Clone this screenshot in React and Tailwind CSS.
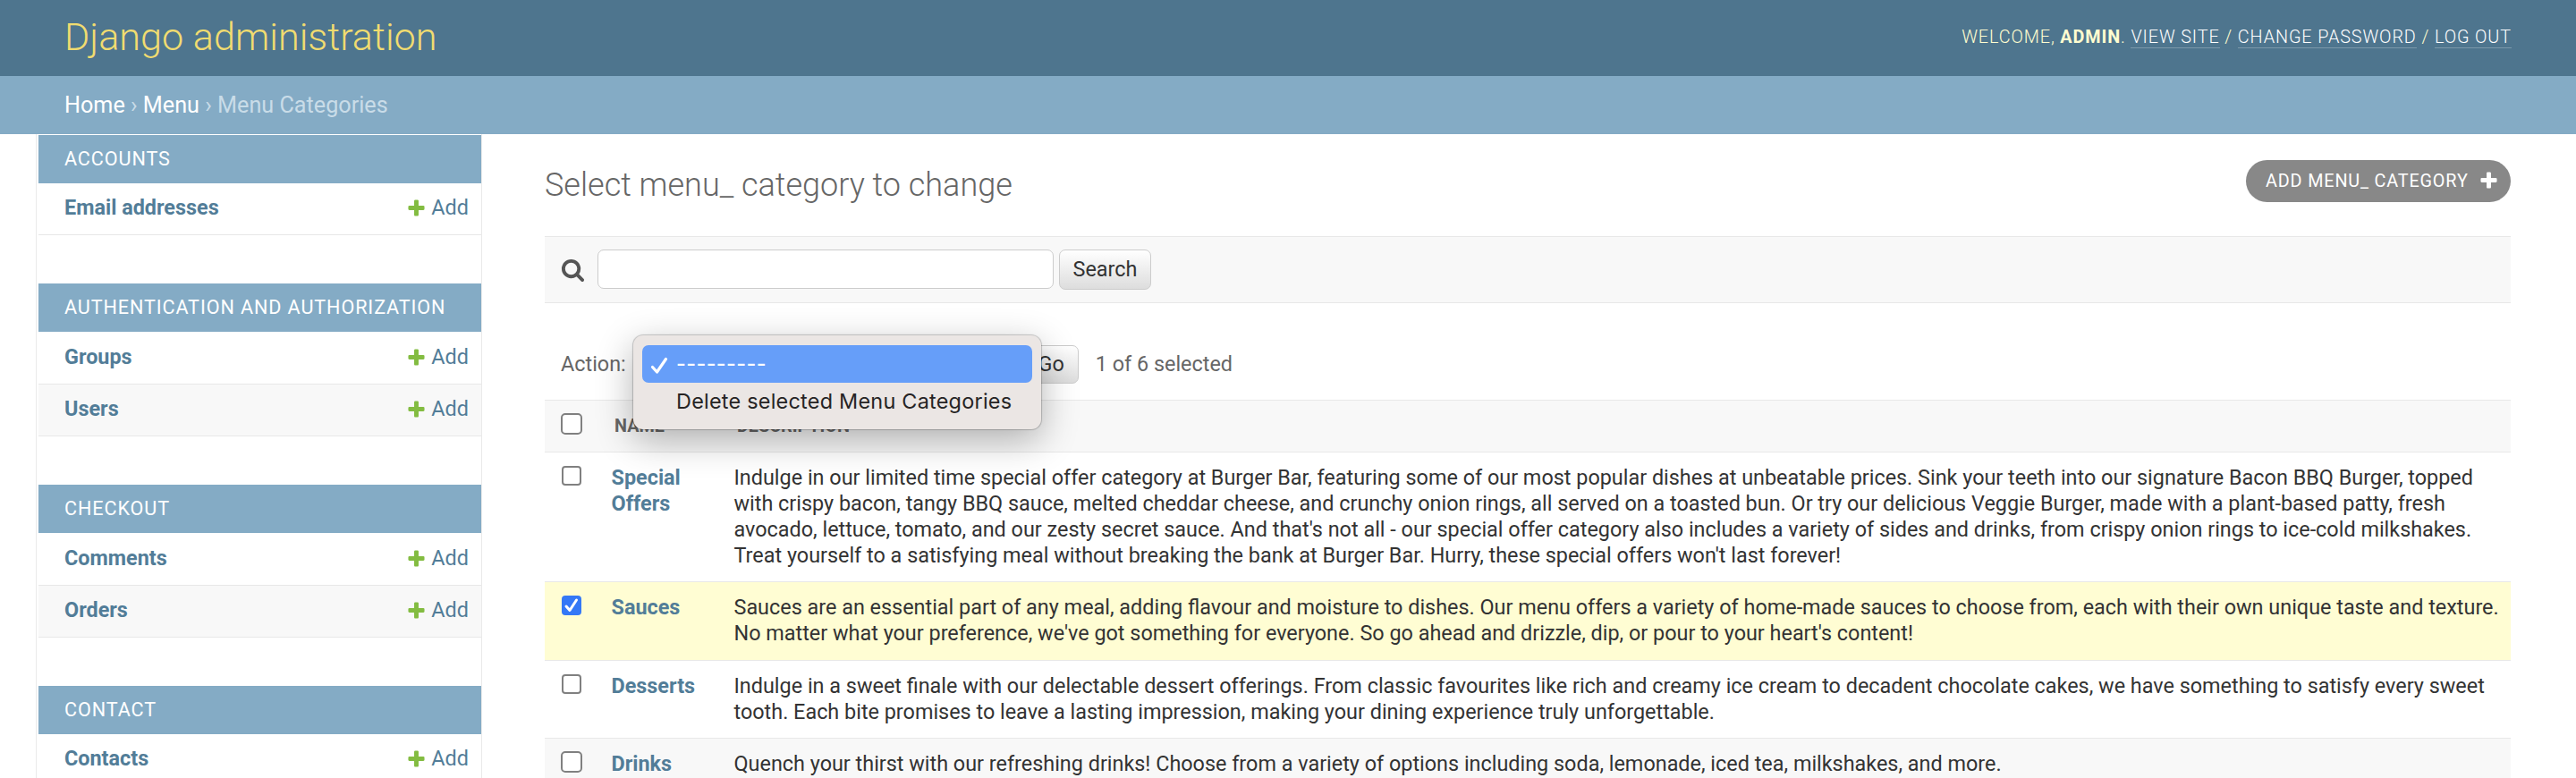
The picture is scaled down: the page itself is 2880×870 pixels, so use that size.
import React from "react";

const groups = [
  { title: "Accounts", gap: "mb-[54px]", rows: [["Email addresses", "h-[58px]"]] },
  { title: "Authentication and Authorization", gap: "mb-[54px]", rows: [["Groups", "h-[59px]"], ["Users", "h-[58px]"]] },
  { title: "Checkout", gap: "mb-[54px]", rows: [["Comments", "h-[59px]"], ["Orders", "h-[58px]"]] },
  { title: "Contact", gap: "", rows: [["Contacts", "h-[58px]"]] },
];

const items = [
  {
    name: ["Special", "Offers"],
    h: "h-[145px] bg-white",
    lines: [
      "Indulge in our limited time special offer category at Burger Bar, featuring some of our most popular dishes at unbeatable prices. Sink your teeth into our signature Bacon BBQ Burger, topped",
      "with crispy bacon, tangy BBQ sauce, melted cheddar cheese, and crunchy onion rings, all served on a toasted bun. Or try our delicious Veggie Burger, made with a plant-based patty, fresh",
      "avocado, lettuce, tomato, and our zesty secret sauce. And that's not all - our special offer category also includes a variety of sides and drinks, from crispy onion rings to ice-cold milkshakes.",
      "Treat yourself to a satisfying meal without breaking the bank at Burger Bar. Hurry, these special offers won't last forever!",
    ],
  },
  {
    name: ["Sauces"],
    checked: true,
    h: "h-[88px] bg-[#fffdd3]",
    lines: [
      "Sauces are an essential part of any meal, adding flavour and moisture to dishes. Our menu offers a variety of home-made sauces to choose from, each with their own unique taste and texture.",
      "No matter what your preference, we've got something for everyone. So go ahead and drizzle, dip, or pour to your heart's content!",
    ],
  },
  {
    name: ["Desserts"],
    h: "h-[87px] bg-white",
    lines: [
      "Indulge in a sweet finale with our delectable dessert offerings. From classic favourites like rich and creamy ice cream to decadent chocolate cakes, we have something to satisfy every sweet",
      "tooth. Each bite promises to leave a lasting impression, making your dining experience truly unforgettable.",
    ],
  },
  {
    name: ["Drinks"],
    large: true,
    h: "h-[88px] bg-[#f8f8f8]",
    lines: [
      "Quench your thirst with our refreshing drinks! Choose from a variety of options including soda, lemonade, iced tea, milkshakes, and more.",
    ],
  },
];

function Plus({ className }) {
  return (
    <svg viewBox="0 0 1792 1792" className={className} fill="currentColor">
      <path d="M1600 796v192q0 40-28 68t-68 28h-416v416q0 40-28 68t-68 28h-192q-40 0-68-28t-28-68v-416h-416q-40 0-68-28t-28-68v-192q0-40 28-68t68-28h416v-416q0-40 28-68t68-28h192q40 0 68 28t28 68v416h416q40 0 68 28t28 68z" />
    </svg>
  );
}

function Magnifier() {
  return (
    <svg viewBox="0 0 1792 1792" className="ml-[18px] mt-[23px] h-[27px] w-[27px] shrink-0" fill="#555555">
      <path d="M1216 832q0-185-131.500-316.500t-316.500-131.500-316.500 131.500-131.500 316.500 131.500 316.500 316.500 131.500 316.500-131.500 131.500-316.500zm512 832q0 52-38 90t-90 38q-54 0-90-38l-343-342q-179 124-399 124-143 0-273.500-55.500t-225-150-150-225-55.500-273.500 55.500-273.500 150-225 225-150 273.500-55.500 273.500 55.500 225 150 150 225 55.500 273.500q0 220-124 399l343 343q37 37 37 90z" />
    </svg>
  );
}

function Checkbox({ checked, large }) {
  if (checked) {
    return (
      <span className="flex h-[22px] w-[22px] items-center justify-center rounded-[4px] bg-[#3478f6]">
        <svg viewBox="0 0 22 22" className="h-[22px] w-[22px]" fill="none" stroke="#ffffff" strokeWidth="3" strokeLinecap="round" strokeLinejoin="round">
          <path d="M5 12 L9 16.500 L16.500 5" />
        </svg>
      </span>
    );
  }
  return (
    <span
      className={
        large
          ? "block h-[24px] w-[24px] rounded-[5px] border-2 border-[#808080] bg-white"
          : "block h-[22px] w-[22px] rounded-[4px] border-2 border-[#808080] bg-white"
      }
    />
  );
}

function SideNav() {
  return (
    <nav className="w-[499px] shrink-0 border-x border-[#eaeaea] pl-[2px] pt-px">
      {groups.map((g) => (
        <section key={g.title} className={g.gap}>
          <h2 className="flex h-[54px] items-center bg-[#84abc5] pl-[29px] text-[21.600px] uppercase leading-none tracking-[0.9px] text-white">
            {g.title}
          </h2>
          {g.rows.map(([name, h], i) => (
            <div
              key={name}
              className={`${h} ${i % 2 ? "bg-[#f8f8f8]" : "bg-white"} flex items-center justify-between border-b border-[#e8e8e8] pb-px pl-[29px] pr-[14px] text-[23.400px] leading-none text-[#527d98]`}
            >
              <span className="font-bold">{name}</span>
              <span className="flex items-center">
                <Plus className="mb-px mr-[5px] h-[23px] w-[23px] text-[#83bc41]" />
                Add
              </span>
            </div>
          ))}
        </section>
      ))}
    </nav>
  );
}

export default function App() {
  return (
    <div className="flex h-[870px] w-[2880px] flex-col overflow-hidden bg-white font-['Roboto',sans-serif] text-[#333333]">
      <header className="flex h-[85px] shrink-0 items-center justify-between bg-[#4e758e] pl-[72px] pr-[72px]">
        <h1 className="pb-[2px] text-[43.200px] font-light leading-none text-[#f1dc70]">Django administration</h1>
        <div className="flex items-start whitespace-pre pb-px text-[19.800px] font-light uppercase leading-[23px] tracking-[0.9px] text-[#fffdd0]">
          Welcome, <b className="font-bold">admin</b>.{" "}
          <a className="border-b border-[#7b98aa] text-white">View site</a> / <a className="border-b border-[#7b98aa] text-white">Change password</a> / <a className="border-b border-[#7b98aa] text-white">Log out</a>
        </div>
      </header>

      <div className="flex h-[65px] shrink-0 items-center whitespace-pre bg-[#84abc5] pl-[72px] text-[25.200px] leading-none text-[#c9dce8]">
        <a className="text-white">Home</a> › <a className="text-white">Menu</a> › Menu Categories
      </div>

      <div className="flex min-h-0 flex-1 pl-[40px] pr-[73px]">
        <SideNav />

        <main className="ml-[70px] flex min-w-0 flex-1 flex-col">
          <div className="flex h-[114px] shrink-0 items-start justify-between">
            <h2 className="mt-[39px] text-[36px] font-light leading-[36px] text-[#666666]">Select menu_ category to change</h2>
            <a className="mt-[29px] flex h-[47px] w-[296px] items-center rounded-[27px] bg-[#888888] pl-[22px] text-[19.800px] uppercase leading-none tracking-[0.850px] text-white">
              Add menu_ category
              <Plus className="mb-[3px] ml-[11px] h-[23px] w-[23px]" />
            </a>
          </div>

          <div className="flex h-[75px] shrink-0 items-start border-y border-[#e8e8e8] bg-[#f8f8f8]">
            <Magnifier />
            <div className="ml-[14px] mt-[14px] h-[44px] w-[510px] rounded-[7px] border border-[#cccccc] bg-white" />
            <button className="ml-[6px] mt-[14px] flex h-[45px] w-[103px] items-center justify-center rounded-[7px] border border-[#cccccc] bg-linear-to-b from-white to-[#dddddd] text-[23.400px] leading-none text-[#333333]">
              Search
            </button>
          </div>

          <div className="relative flex h-[108px] shrink-0 items-center pt-[29px] text-[23.400px] leading-none text-[#666666]">
            <span className="ml-[18px]">Action:</span>
            <button className="ml-[440px] flex h-[43px] w-[66px] items-center justify-end rounded-[7px] border border-[#cccccc] bg-linear-to-b from-white to-[#dddddd] pr-[15px] text-[#333333]">
              Go
            </button>
            <span className="ml-[19px]">1 of 6 selected</span>

            <div className="absolute left-[99px] top-[36px] z-10 h-[105px] w-[456px] rounded-[11px] bg-[#ebe6e4] px-[10px] pt-[11px] font-['Inter',sans-serif] text-[23.400px] shadow-[0_0_1px_1px_rgba(0,0,0,0.2),0_12px_40px_rgba(0,0,0,0.3)]">
              <div className="flex h-[42px] items-center rounded-[7px] bg-[#669ef9] pl-[8px] font-medium tracking-[0.400px] text-white">
                <svg viewBox="0 0 22 22" className="mr-[8px] mt-[3px] h-[22px] w-[22px]" fill="none" stroke="currentColor" strokeWidth="3.2" strokeLinecap="round" strokeLinejoin="round">
                  <path d="M3.500 12.500 L8.500 18 L18.500 3.500" />
                </svg>
                ---------
              </div>
              <div className="flex h-[42px] items-center pl-[38px] tracking-[0.250px] text-[#262424]">Delete selected Menu Categories</div>
            </div>
          </div>

          <div className="flex h-[59px] shrink-0 border-y border-[#e8e8e8] bg-[#f8f8f8] text-[19.800px] font-bold uppercase leading-none text-[#666666]">
            <div className="w-[78px] pl-[18px] pt-[14px]">
              <Checkbox large />
            </div>
            <div className="w-[137px] pt-[19px]">Name</div>
            <div className="pt-[19px]">Description</div>
          </div>

          {items.map((it) => (
            <div key={it.name[0]} className={`${it.h} flex shrink-0 border-b border-[#e8e8e8] text-[23.400px] leading-[28.800px]`}>
              <div className={it.large ? "w-[74.500px] pl-[18px] pt-[14px]" : "w-[74.500px] pl-[19px] pt-[15px]"}>
                <Checkbox checked={it.checked} large={it.large} />
              </div>
              <div className="w-[137px] pt-[14.400px] font-bold text-[#527d98]">
                {it.name.map((n) => (
                  <div key={n}>{n}</div>
                ))}
              </div>
              <div className="whitespace-nowrap pt-[14.400px]">
                {it.lines.map((l) => (
                  <div key={l}>{l}</div>
                ))}
              </div>
            </div>
          ))}
        </main>
      </div>
    </div>
  );
}
